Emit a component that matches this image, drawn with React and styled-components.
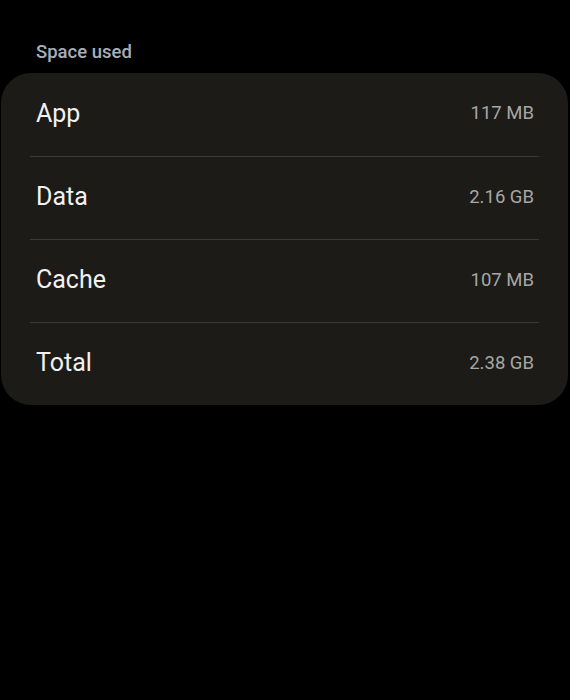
import styled, { createGlobalStyle } from "styled-components";

const Global = createGlobalStyle`
body{
margin:0;
background:#000;
font-family:Roboto, "Noto Sans", sans-serif;
}
`;

const Page = styled.div`
width:570px;
height:700px;
background:#000;
padding-top:40px;
box-sizing:border-box;
`;

const Header = styled.div`
font-size:18.5px;
font-weight:500;
color:#a8afb9;
padding-left:36px;
height:33px;
line-height:24px;
`;

const Card = styled.div`
margin:0 2px 0 1px;
background:#1c1b18;
border-radius:30px;
display:flex;
flex-direction:column;
`;

const Row = styled.div`
display:flex;
align-items:center;
justify-content:space-between;
height:83px;
margin:0 29px;
padding:0 5px 3px 6px;
border-top:${(p) => (p.first ? "none" : "1px solid #3b3a37")};
box-sizing:border-box;
`;

const Label = styled.span`
font-size:25px;
color:#f1f1f1;
`;

const Value = styled.span`
font-size:18.5px;
color:#a7a7a5;
`;

const rows = [
  ["App", "117 MB"],
  ["Data", "2.16 GB"],
  ["Cache", "107 MB"],
  ["Total", "2.38 GB"],
];

export default function App() {
  return (
    <Page>
      <Global />
      <Header>Space used</Header>
      <Card>
        {rows.map(([k, v], i) => (
          <Row key={k} first={i === 0}>
            <Label>{k}</Label>
            <Value>{v}</Value>
          </Row>
        ))}
      </Card>
    </Page>
  );
}
